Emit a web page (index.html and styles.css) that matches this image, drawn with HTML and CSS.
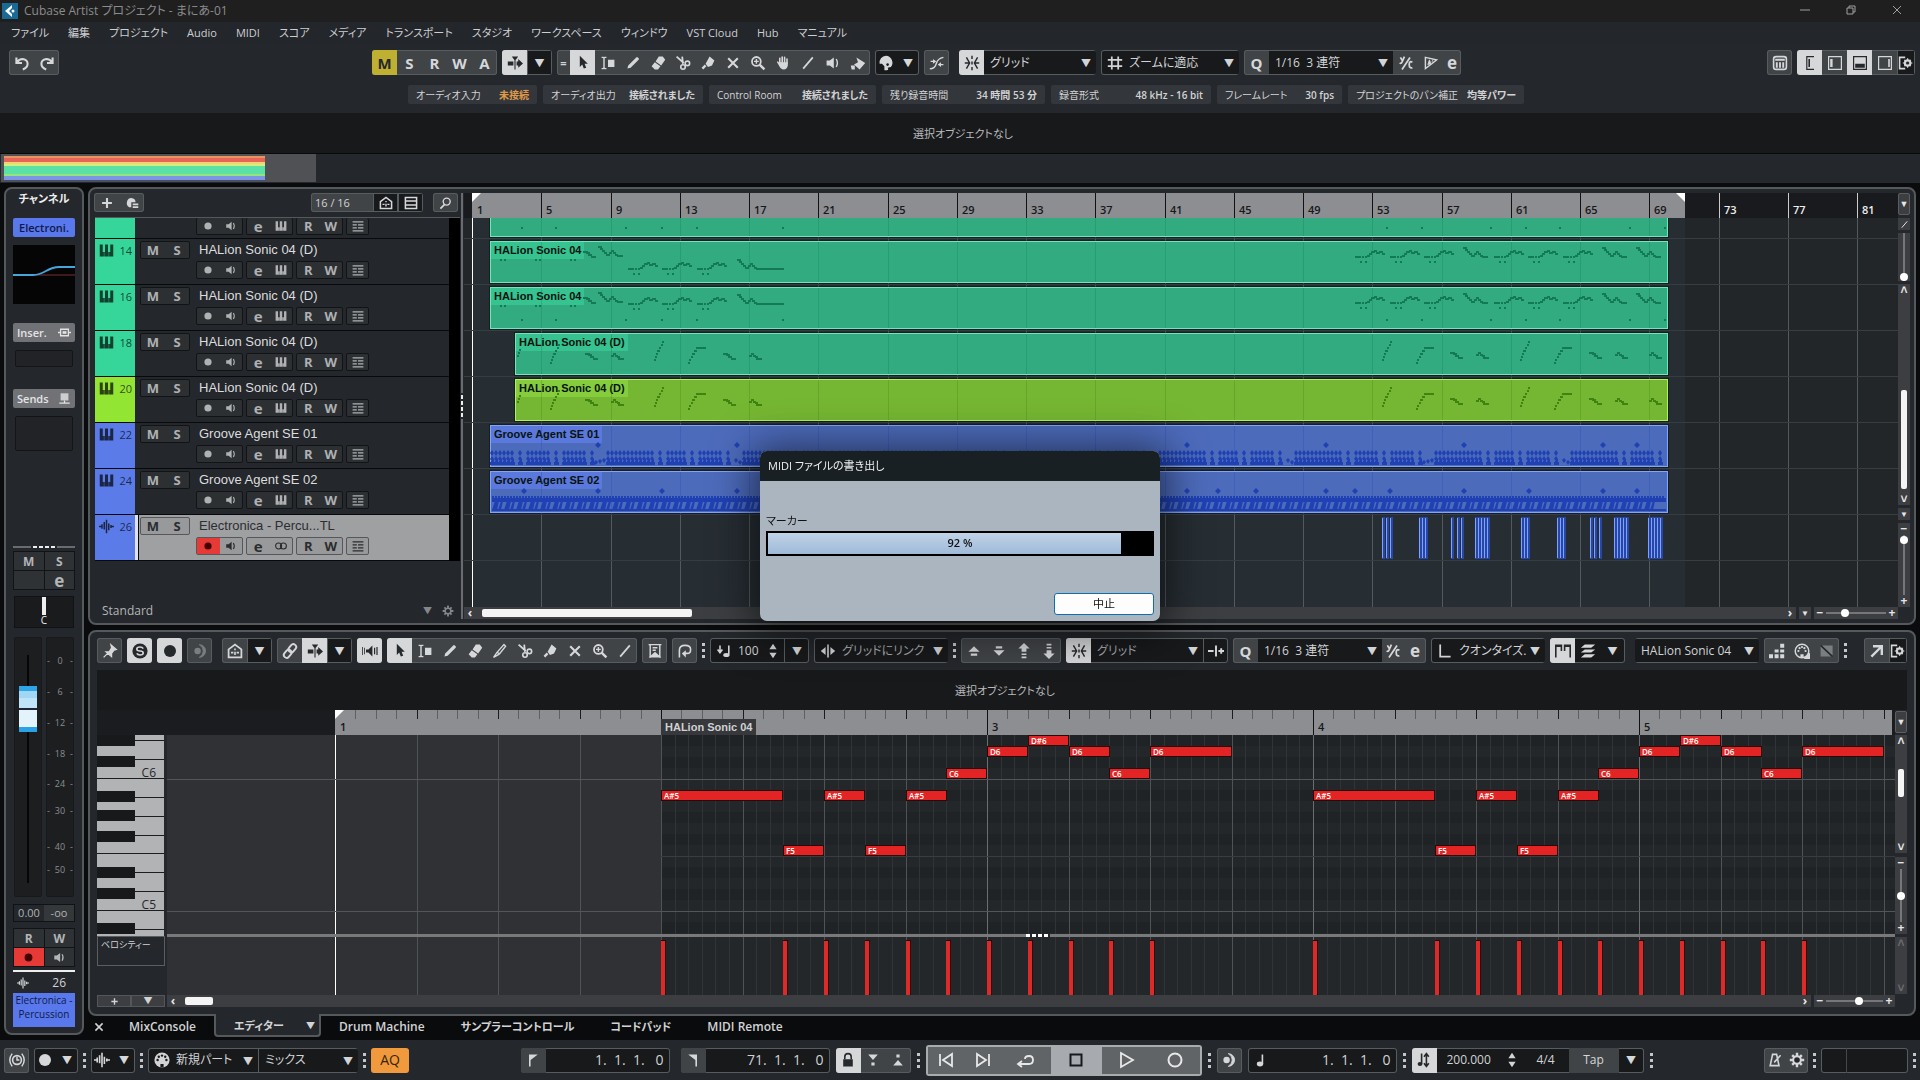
FILE: index.html
```html
<!DOCTYPE html>
<html lang="ja">
<head>
    <meta charset="UTF-8">
    <meta name="viewport" content="width=device-width, initial-scale=1.0">
    <title>Cubase Artist プロジェクト - まにあ-01</title>
    <link rel="stylesheet" href="styles.css">
</head>
<body>
    <!-- icon sprite -->
    <svg class="sprite" width="0" height="0">
        <symbol id="i-undo" viewBox="0 0 20 20"><path d="M3 3v7h7M4 9q2-4 7-4 6 1 6 6t-6 7" fill="none" stroke="currentColor" stroke-width="2.6"/></symbol>
        <symbol id="i-redo" viewBox="0 0 20 20"><path d="M17 3v7h-7M16 9q-2-4-7-4-6 1-6 6t6 7" fill="none" stroke="currentColor" stroke-width="2.6"/></symbol>
        <symbol id="i-scroll" viewBox="0 0 20 20"><path d="M6 2h8l-3 4H9zM9.300 5h1.400v13H9.300zM1 8h7v5H1zM12 8h2V5l6 5.500-6 5.500v-3h-2z" fill="currentColor"/></symbol>
        <symbol id="i-cursor" viewBox="0 0 20 20"><path d="M6 1v14l3-3 2 5 3-1-2-5h4z" fill="currentColor"/></symbol>
        <symbol id="i-ibeam" viewBox="0 0 20 20"><path d="M2 3h2l1 1 1-1h2M2 17h2l1-1 1 1h2M5 4v12" fill="none" stroke="currentColor" stroke-width="1.8"/><path d="M10 6h8v9h-8z" fill="currentColor"/></symbol>
        <symbol id="i-pencil" viewBox="0 0 20 20"><path d="M3 17l1-4L14 3q1-1 2 0l1 1q1 1 0 2L7 16z" fill="currentColor"/></symbol>
        <symbol id="i-eraser" viewBox="0 0 20 20"><path d="M11 2h5l3 4-5 7-7-5zM6 9l7 5-3 4H6l-4-4z" fill="currentColor"/></symbol>
        <symbol id="i-cut" viewBox="0 0 20 20"><path d="M2 2l9 8M9 2l1 9" stroke="currentColor" stroke-width="2.200"/><g fill="none" stroke="currentColor" stroke-width="2"><circle cx="10" cy="15" r="2.800"/><circle cx="15.500" cy="10.500" r="2.800"/></g></symbol>
        <symbol id="i-glue" viewBox="0 0 20 20"><path d="M12 2l6 5-3 6-5 2-3-4zM6 12l2 2-4 4-2-2z" fill="currentColor"/></symbol>
        <symbol id="i-x" viewBox="0 0 20 20"><path d="M4 4l12 12M16 4L4 16" stroke="currentColor" stroke-width="2.600"/></symbol>
        <symbol id="i-zoom" viewBox="0 0 20 20"><circle cx="8" cy="8" r="5.500" fill="none" stroke="currentColor" stroke-width="2.200"/><path d="M12 12l6 6" stroke="currentColor" stroke-width="3"/><path d="M5 8h6M8 5v6" stroke="currentColor" stroke-width="1.800"/></symbol>
        <symbol id="i-search" viewBox="0 0 20 20"><circle cx="11" cy="8" r="5" fill="none" stroke="currentColor" stroke-width="2"/><path d="M8 12l-6 6" stroke="currentColor" stroke-width="2.500"/></symbol>
        <symbol id="i-hand" viewBox="0 0 20 20"><path d="M6 11V4M9 10V2.500M12 10V3M15 11V5M3.500 9l2.500 4" stroke="currentColor" stroke-width="2" stroke-linecap="round"/><path d="M5 9h11v4q-1 5-5 5-4 0-6-5z" fill="currentColor"/></symbol>
        <symbol id="i-line" viewBox="0 0 20 20"><path d="M4 17L16 3" stroke="currentColor" stroke-width="2.200"/></symbol>
        <symbol id="i-speaker" viewBox="0 0 20 20"><path d="M2 7h4l5-4v14l-5-4H2z" fill="currentColor"/><path d="M14 5q3 5 0 10" fill="none" stroke="currentColor" stroke-width="1.800"/></symbol>
        <symbol id="i-bucket" viewBox="0 0 20 20"><path d="M8 3l11 7-7 8-7-6 5-3zM1 13h5v5H2z" fill="currentColor"/></symbol>
        <symbol id="i-palette" viewBox="0 0 20 20"><path d="M10 1a8.500 8.500 0 0 1 6 14l-4 1q2 3-1 3H8v-5l-3-3H2A8.500 8.500 0 0 1 10 1z" fill="currentColor"/><circle cx="12" cy="12" r="1.600" fill="#17191b"/></symbol>
        <symbol id="i-curve" viewBox="0 0 20 20"><path d="M1 17q6 1 8-6t9-8M2 8h6M12 12h6" fill="none" stroke="currentColor" stroke-width="1.800"/><path d="M5 5l4 3-4 3zM15 9l-4 3 4 3z" fill="currentColor"/></symbol>
        <symbol id="i-snap" viewBox="0 0 20 20"><path d="M10 1v4M10 8v4M10 15v4M3 3l4 7-4 7M17 3l-4 7 4 7M1 10h5M14 10h5" fill="none" stroke="currentColor" stroke-width="1.800"/></symbol>
        <symbol id="i-hash" viewBox="0 0 20 20"><path d="M6 2v16M14 2v16M1 6h18M1 14h18" stroke="currentColor" stroke-width="2.200"/></symbol>
        <symbol id="i-iq" viewBox="0 0 20 20"><path d="M3 3l3 5M8 2L5 9q-1 2-3 1M15 3L5 18M18 9q-4-2-4 3t4 4" fill="none" stroke="currentColor" stroke-width="2.200"/></symbol>
        <symbol id="i-auto" viewBox="0 0 20 20"><path d="M3 3l14 3-6 5-8 6z" fill="none" stroke="currentColor" stroke-width="1.800"/><path d="M6 12l2-6 2 5zM11 9l2-4" fill="currentColor" stroke="currentColor"/></symbol>
        <symbol id="i-keyb" viewBox="0 0 20 20"><rect x="2" y="2" width="16" height="16" rx="3" fill="none" stroke="currentColor" stroke-width="2"/><path d="M6 9v7M10 9v7M14 9v7M4 6h12" stroke="currentColor" stroke-width="2.400"/></symbol>
        <symbol id="i-zl" viewBox="0 0 20 20"><path d="M15 2H6v16h9" fill="none" stroke="currentColor" stroke-width="1.500"/><path d="M8 5h2v10H8z" fill="currentColor"/></symbol>
        <symbol id="i-zleft" viewBox="0 0 20 20"><path d="M2 2h16v16H2z" fill="none" stroke="currentColor" stroke-width="1.500"/><path d="M4 5h3v10H4z" fill="currentColor"/></symbol>
        <symbol id="i-zlow" viewBox="0 0 20 20"><path d="M2 2h16v16H2z" fill="none" stroke="currentColor" stroke-width="1.500"/><path d="M4 11h12v5H4z" fill="currentColor"/></symbol>
        <symbol id="i-zright" viewBox="0 0 20 20"><path d="M2 2h16v16H2z" fill="none" stroke="currentColor" stroke-width="1.500"/><path d="M14 5h2v10h-2z" fill="currentColor"/></symbol>
        <symbol id="i-setup" viewBox="0 0 20 20"><path d="M9 3H2v14h7" fill="none" stroke="currentColor" stroke-width="2"/><circle cx="12" cy="10" r="3.500" fill="none" stroke="currentColor" stroke-width="2.500"/><path d="M12 4v12M6 10h12M8 6l8 8M16 6l-8 8" stroke="currentColor" stroke-width="1.500"/><circle cx="12" cy="10" r="2" fill="#24272b"/></symbol>
        <symbol id="i-gear" viewBox="0 0 20 20"><path d="M10 1v18M1 10h18M4 4l12 12M16 4L4 16" stroke="currentColor" stroke-width="3"/><circle cx="10" cy="10" r="6" fill="currentColor"/><circle cx="10" cy="10" r="3.500" fill="#24272b"/></symbol>
        <symbol id="i-piano" viewBox="0 0 20 20"><path d="M1 2h4v10h1.500v6H1zM8 2h4v10h1v6H7v-6h1zM19 2h-4v10h-1.500v6H19z" fill="currentColor"/></symbol>
        <symbol id="i-wave" viewBox="0 0 20 20"><path d="M0 10h3M4 7v6M7 4v10M10 1v18M13 6v9M16 8v4M17 10h3" stroke="currentColor" stroke-width="2"/></symbol>
        <symbol id="i-rec" viewBox="0 0 20 20"><circle cx="10" cy="10" r="6" fill="currentColor"/></symbol>
        <symbol id="i-lanes" viewBox="0 0 20 20"><path d="M1 3h18M1 8h7M10 8h9M1 13h7M10 13h9M1 18h18" stroke="currentColor" stroke-width="2"/></symbol>
        <symbol id="i-stereo" viewBox="0 0 20 20"><g fill="none" stroke="currentColor" stroke-width="1.800"><circle cx="6" cy="10" r="5"/><circle cx="14" cy="10" r="5"/></g></symbol>
        <symbol id="i-house" viewBox="0 0 20 20"><path d="M2 8l8-6 8 6v10H2z" fill="none" stroke="currentColor" stroke-width="2.200"/><path d="M10 7v2M10 11v4M5 12h3M12 12h3" stroke="currentColor" stroke-width="2"/></symbol>
        <symbol id="i-list" viewBox="0 0 20 20"><path d="M2 2h16v16H2zM2 7h16M2 13h16" fill="none" stroke="currentColor" stroke-width="2.200"/></symbol>
        <symbol id="i-plus" viewBox="0 0 20 20"><path d="M10 3v14M3 10h14" stroke="currentColor" stroke-width="3"/></symbol>
        <symbol id="i-preset" viewBox="0 0 20 20"><path d="M9 3a7 6 0 0 1 6 6H9v7H6A7 7 0 0 1 9 3z" fill="currentColor"/><path d="M11 12h8M11 16h8" stroke="currentColor" stroke-width="2.500"/></symbol>
        <symbol id="i-pin" viewBox="0 0 20 20"><path d="M11 2l7 6-3 1-3 4v4L5 11h4l3-5zM8 12l-6 6" fill="currentColor" stroke="currentColor" stroke-width="1.500"/></symbol>
        <symbol id="i-solo" viewBox="0 0 20 20"><circle cx="10" cy="10" r="9.500" fill="currentColor"/><path d="M14 7q-1-2-4-2-4 0-4 2.500T10 10t4 2.500T10 15q-3 0-4-2" fill="none" stroke="#d6d7d9" stroke-width="2"/></symbol>
        <symbol id="i-disc" viewBox="0 0 20 20"><circle cx="10" cy="10" r="7.500" fill="currentColor"/></symbol>
        <symbol id="i-moon" viewBox="0 0 20 20"><circle cx="7" cy="10" r="4" fill="currentColor"/><path d="M9 2a8 8 0 0 1 0 16q5-3 5-8t-5-8z" fill="currentColor" stroke="currentColor"/></symbol>
        <symbol id="i-link" viewBox="0 0 20 20"><g fill="none" stroke="currentColor" stroke-width="2.400" transform="rotate(-50 10 10)"><rect x="0" y="6.500" width="11" height="7" rx="3.500"/><rect x="9" y="6.500" width="11" height="7" rx="3.500"/></g></symbol>
        <symbol id="i-horn" viewBox="0 0 20 20"><path d="M5 8h3l5-5v14l-5-5H5zM15 6h1.500v8H15zM18 5h1.500v10H18zM0 5h1v10H0zM2.500 6h1v8h-1z" fill="currentColor"/></symbol>
        <symbol id="i-trim" viewBox="0 0 20 20"><path d="M2 18l4-6L15 2l2 2L9 14zM7 12l3 2" fill="none" stroke="currentColor" stroke-width="1.700"/></symbol>
        <symbol id="i-marker" viewBox="0 0 20 20"><path d="M2 2h16M4 2v16M16 2v16M7 6h6M7 9h4" stroke="currentColor" stroke-width="1.800"/><path d="M2 18l8-7 8 7z" fill="currentColor"/></symbol>
        <symbol id="i-loop" viewBox="0 0 20 20"><path d="M3 18V9q0-6 7-6t7 5-4 5H9" fill="none" stroke="currentColor" stroke-width="2"/><path d="M11 9v9l-5-5z" fill="currentColor"/></symbol>
        <symbol id="i-note" viewBox="0 0 20 20"><path d="M5 3v9M2 8l3 4 3-4M16 3v11" fill="none" stroke="currentColor" stroke-width="2"/><ellipse cx="13" cy="15" rx="4" ry="2.500" fill="currentColor"/></symbol>
        <symbol id="i-qnote" viewBox="0 0 20 20"><path d="M13 3v12" stroke="currentColor" stroke-width="2"/><ellipse cx="10" cy="15" rx="4" ry="3" fill="currentColor"/></symbol>
        <symbol id="i-spin" viewBox="0 0 10 20"><path d="M5 2l4 6H1zM5 18l4-6H1z" fill="currentColor"/></symbol>
        <symbol id="i-glink" viewBox="0 0 20 20"><path d="M10 2v16" stroke="currentColor" stroke-width="2"/><path d="M7 5v10l-6-5zM13 5v10l6-5z" fill="currentColor"/></symbol>
        <symbol id="i-up" viewBox="0 0 20 20"><path d="M10 4l7 7H3zM6 13h8v3H6z" fill="currentColor"/></symbol>
        <symbol id="i-down" viewBox="0 0 20 20"><path d="M10 16l7-7H3zM6 4h8v3H6z" fill="currentColor"/></symbol>
        <symbol id="i-up2" viewBox="0 0 20 20"><path d="M10 0l7 7h-4v4H7V7H3zM7 13h6v2H7zM7 17h6v2H7z" fill="currentColor"/></symbol>
        <symbol id="i-down2" viewBox="0 0 20 20"><path d="M10 20l7-7h-4V9H7v4H3zM7 5h6v2H7zM7 1h6v2H7z" fill="currentColor"/></symbol>
        <symbol id="i-zero" viewBox="0 0 20 20"><path d="M0 10h7M10 3v14M13 10h7M16.500 6.500v7" stroke="currentColor" stroke-width="2.400"/></symbol>
        <symbol id="i-len" viewBox="0 0 20 20"><path d="M4 2v15h13" fill="none" stroke="currentColor" stroke-width="2.200"/></symbol>
        <symbol id="i-parts" viewBox="0 0 20 20"><path d="M0 2h9v8H7V5H2v13H0zM11 2h9v16h-2V5h-5v5h-2z" fill="currentColor"/></symbol>
        <symbol id="i-layers" viewBox="0 0 20 20"><path d="M6 2h13l-5 4H1zM6 8h13l-5 4H1zM6 14h13l-5 4H1z" fill="currentColor"/></symbol>
        <symbol id="i-steps" viewBox="0 0 20 20"><path d="M0 14h5v5H0zM7 14h5v5H7zM14 14h5v5h-5zM7 8h5v4H7zM14 8h5v4h-5zM14 1h5v5h-5z" fill="currentColor"/></symbol>
        <symbol id="i-midi" viewBox="0 0 20 20"><circle cx="10" cy="10" r="8.500" fill="none" stroke="currentColor" stroke-width="1.800"/><g fill="currentColor"><circle cx="5.500" cy="10" r="1.400"/><circle cx="7" cy="6.500" r="1.400"/><circle cx="10" cy="5" r="1.400"/><circle cx="13" cy="6.500" r="1.400"/><circle cx="14.500" cy="10" r="1.400"/><path d="M8 14h4v4H8zM20 12v8h-8z"/></g></symbol>
        <symbol id="i-din" viewBox="0 0 20 20"><circle cx="10" cy="10" r="9.500" fill="currentColor"/><g fill="#17191b"><circle cx="4.500" cy="10" r="1.500"/><circle cx="6" cy="6" r="1.500"/><circle cx="10" cy="4.500" r="1.500"/><circle cx="14" cy="6" r="1.500"/><circle cx="15.500" cy="10" r="1.500"/><path d="M8 15h4v4H8z"/></g></symbol>
        <symbol id="i-dim" viewBox="0 0 20 20"><path d="M2 3h15v14z M2 3v14h15" fill="currentColor"/><path d="M2 3l15 14" stroke="#24272b" stroke-width="2"/></symbol>
        <symbol id="i-open" viewBox="0 0 20 20"><path d="M3 17L15 5M5 4h11v11" fill="none" stroke="currentColor" stroke-width="3"/></symbol>
        <symbol id="i-clock" viewBox="0 0 20 20"><circle cx="10" cy="10" r="5.500" fill="none" stroke="currentColor" stroke-width="2"/><path d="M10 6v4h3M4 2q-6 8 0 16M16 2q6 8 0 16" fill="none" stroke="currentColor" stroke-width="1.800"/></symbol>
        <symbol id="i-locl" viewBox="0 0 20 20"><path d="M5 3h11l-9 7v8H5z" fill="currentColor"/></symbol>
        <symbol id="i-locr" viewBox="0 0 20 20"><path d="M15 3H4l9 7v8h2z" fill="currentColor"/></symbol>
        <symbol id="i-lock" viewBox="0 0 20 20"><path d="M4 9h12v9H4z" fill="currentColor"/><path d="M6 9V6q0-4 4-4t4 4v3" fill="none" stroke="currentColor" stroke-width="2"/></symbol>
        <symbol id="i-pin1" viewBox="0 0 20 20"><path d="M4 3h12l-6 7zM8 13h4v4H8z" fill="currentColor"/></symbol>
        <symbol id="i-pin2" viewBox="0 0 20 20"><path d="M4 17h12l-6-7zM8 3h4v4H8z" fill="currentColor"/></symbol>
        <symbol id="i-prev" viewBox="0 0 20 20"><path d="M4 4v12M16 4v12l-9-6z" fill="none" stroke="currentColor" stroke-width="1.800"/></symbol>
        <symbol id="i-next" viewBox="0 0 20 20"><path d="M16 4v12M4 4v12l9-6z" fill="none" stroke="currentColor" stroke-width="1.800"/></symbol>
        <symbol id="i-cycle" viewBox="0 0 20 20"><path d="M3 14h10q4 0 4-4t-4-4-4 3M6 11l-4 3 4 3" fill="none" stroke="currentColor" stroke-width="1.800"/></symbol>
        <symbol id="i-stop" viewBox="0 0 20 20"><path d="M4.500 4.500h11v11h-11z" fill="none" stroke="currentColor" stroke-width="2"/></symbol>
        <symbol id="i-play" viewBox="0 0 20 20"><path d="M5 3v14l12-7z" fill="none" stroke="currentColor" stroke-width="1.800"/></symbol>
        <symbol id="i-record" viewBox="0 0 20 20"><circle cx="10" cy="10" r="6.500" fill="none" stroke="currentColor" stroke-width="2"/></symbol>
        <symbol id="i-tempo" viewBox="0 0 20 20"><path d="M7 2v13M13 3v14M10 6l3-4 3 4M10 14l3 4 3-4" fill="none" stroke="currentColor" stroke-width="2"/><ellipse cx="5" cy="15" rx="3" ry="2.500" fill="currentColor"/></symbol>
        <symbol id="i-metro" viewBox="0 0 20 20"><path d="M7 3h5l3 14H4zM9 13l8-9" fill="none" stroke="currentColor" stroke-width="2"/></symbol>
        <symbol id="i-insert" viewBox="0 0 20 20"><path d="M4 5h12v10H4zM0 10h4M16 10h4" fill="none" stroke="currentColor" stroke-width="2"/><path d="M7 8h6v4H7z" fill="currentColor"/></symbol>
        <symbol id="i-send" viewBox="0 0 20 20"><path d="M4 2h12v11H4z" fill="currentColor" opacity=".8"/><path d="M2 17h16M10 13v5" stroke="currentColor" stroke-width="2"/></symbol>
    </svg>

    <header class="titlebar">
        <svg class="logo" viewBox="0 0 16 16"><rect width="16" height="16" fill="#1a6a96"/><path d="M10 2L3 8l7 6v-3L7 8l3-3z" fill="#fff"/><circle cx="11" cy="8" r="1.500" fill="#fff"/></svg>
        <span class="app-title">Cubase Artist プロジェクト - まにあ-01</span>
        <div class="win-buttons">
            <button aria-label="最小化"><svg viewBox="0 0 10 10"><path d="M0 5h10"/></svg></button>
            <button aria-label="元に戻す"><svg viewBox="0 0 10 10"><path d="M1 3h6v6H1zM3 3V1h6v6H7"/></svg></button>
            <button aria-label="閉じる"><svg viewBox="0 0 10 10"><path d="M1 1l8 8M9 1L1 9"/></svg></button>
        </div>
    </header>

    <nav class="menubar">
        <a href="#">ファイル</a><a href="#">編集</a><a href="#">プロジェクト</a><a href="#">Audio</a><a href="#">MIDI</a><a href="#">スコア</a><a href="#">メディア</a><a href="#">トランスポート</a><a href="#">スタジオ</a><a href="#">ワークスペース</a><a href="#">ウィンドウ</a><a href="#">VST Cloud</a><a href="#">Hub</a><a href="#">マニュアル</a>
    </nav>

    <div class="toolbar main-toolbar">
        <div class="group">
            <button><svg><use href="#i-undo"/></svg></button><button><svg><use href="#i-redo"/></svg></button>
        </div>
        <div class="toolbar-mid">
            <div class="group letters"><button class="mute-on">M</button><button>S</button><button>R</button><button>W</button><button>A</button></div>
            <div class="group"><button class="on"><svg><use href="#i-scroll"/></svg></button><button class="dark">▼</button></div>
            <div class="group">
                <i class="handle">=</i>
                <button class="on"><svg><use href="#i-cursor"/></svg></button><button><svg><use href="#i-ibeam"/></svg></button><button><svg><use href="#i-pencil"/></svg></button><button><svg><use href="#i-eraser"/></svg></button><button><svg><use href="#i-cut"/></svg></button><button><svg><use href="#i-glue"/></svg></button><button><svg><use href="#i-x"/></svg></button><button><svg><use href="#i-zoom"/></svg></button><button><svg><use href="#i-hand"/></svg></button><button><svg><use href="#i-line"/></svg></button><button><svg><use href="#i-speaker"/></svg></button><button><svg><use href="#i-bucket"/></svg></button>
            </div>
            <div class="group field narrow"><button><svg><use href="#i-palette"/></svg></button><button>▼</button></div>
            <div class="group"><button><svg><use href="#i-curve"/></svg></button></div>
            <div class="group field push"><button class="on"><svg><use href="#i-snap"/></svg></button><span class="pick w112"><select aria-label="スナップ"><option>グリッド</option></select></span></div>
            <div class="group field"><svg class="lead"><use href="#i-hash"/></svg><span class="pick w116"><select aria-label="グリッドの種類"><option>ズームに適応</option></select></span></div>
            <div class="group"><button class="q">Q</button><span class="pick w124"><select aria-label="クオンタイズ"><option>1/16&nbsp; 3 連符</option></select></span><button><svg><use href="#i-iq"/></svg></button><button><svg><use href="#i-auto"/></svg></button><button class="e slim">e</button></div>
        </div>
        <div class="toolbar-end">
            <div class="group"><button><svg><use href="#i-keyb"/></svg></button></div>
            <div class="group"><button class="on"><svg><use href="#i-zl"/></svg></button><button><svg><use href="#i-zleft"/></svg></button><button class="on"><svg><use href="#i-zlow"/></svg></button><button><svg><use href="#i-zright"/></svg></button><button class="dark slim"><svg><use href="#i-setup"/></svg></button></div>
        </div>
    </div>

    <dl class="status">
        <div><dt>オーディオ入力</dt><dd class="warn">未接続</dd></div>
        <div><dt>オーディオ出力</dt><dd>接続されました</dd></div>
        <div><dt>Control Room</dt><dd>接続されました</dd></div>
        <div><dt>残り録音時間</dt><dd>34 時間 53 分</dd></div>
        <div><dt>録音形式</dt><dd>48 kHz - 16 bit</dd></div>
        <div><dt>フレームレート</dt><dd>30 fps</dd></div>
        <div><dt>プロジェクトのパン補正</dt><dd>均等パワー</dd></div>
    </dl>

    <div class="infoline">選択オブジェクトなし</div>

    <div class="overview"><div class="overview-view"><div class="overview-parts"></div></div></div>

    <main class="workspace">
        <aside class="panel inspector">
            <h2>チャンネル</h2>
            <button class="ch-select">Electroni.</button>
            <svg class="eq" viewBox="0 0 62 59"><path d="M0 30h62" stroke="#7c2f38"/><path d="M0 30h20c12 0 14-8 26-8h16" fill="none" stroke="#45a5dc" stroke-width="2"/></svg>
            <button class="section">Inser.<svg><use href="#i-insert"/></svg></button>
            <div class="slot"></div>
            <button class="section">Sends<svg><use href="#i-send"/></svg></button>
            <div class="slot tall"></div>
            <div class="splitter"></div>
            <div class="ch-grid"><button>M</button><button>S</button><button></button><button class="e">e</button></div>
            <div class="pan"><i></i>C</div>
            <div class="meters">
                <div class="strip"><input class="fader" type="range" min="0" max="100" value="83" aria-label="音量"></div>
                <div class="strip scale" id="scale"></div>
            </div>
            <div class="values"><input value="0.00" aria-label="レベル"><output>-oo</output></div>
            <div class="ch-grid"><button>R</button><button>W</button><button class="armed"><svg><use href="#i-rec"/></svg></button><button><svg><use href="#i-speaker"/></svg></button></div>
            <div class="ch-num"><svg><use href="#i-wave"/></svg>26</div>
            <div class="ch-name">Electronica -<br>Percussion</div>
        </aside>

        <div class="zones">
            <section class="panel project">
                <div class="tracklist">
                    <div class="tl-head">
                        <div class="group"><button><svg><use href="#i-plus"/></svg></button><button><svg><use href="#i-preset"/></svg></button></div>
                        <div class="group count"><span>16 / 16</span><button class="dark"><svg><use href="#i-house"/></svg></button><button class="dark"><svg><use href="#i-list"/></svg></button></div>
                        <div class="group"><button><svg><use href="#i-search"/></svg></button></div>
                    </div>
                    <div class="tracks" id="tracks"></div>
                    <div class="tl-foot"><span>Standard</span><i>▼</i><svg><use href="#i-gear"/></svg></div>
                </div>
                <div class="v-divider"></div>
                <div class="timeline">
                    <div class="ruler" id="ruler"></div>
                    <div class="lanes" id="lanes"></div>
                    <div class="hscroll"><b>‹</b><div class="htrack"><div class="hthumb wide"></div></div><b>›</b><b class="cell">▼</b><div class="zoomer"><b>−</b><input type="range" value="28" aria-label="横ズーム"><b>+</b></div></div>
                </div>
                <div class="vscroll">
                    <b class="cell head">▼</b>
                    <b class="cell"><svg><use href="#i-line"/></svg></b>
                    <input class="vr" type="range" value="0" aria-label="波形ズーム">
                    <div class="vtrack"><b>˄</b><div class="vthumb low"></div><b>˅</b></div>
                    <b class="cell">▼</b>
                    <div class="vzoom"><b>−</b><input class="vr" type="range" value="98" aria-label="縦ズーム"><b>+</b></div>
                </div>
            </section>

            <section class="panel editor">
                <div class="toolbar ed-toolbar">
                    <div class="group"><button><svg><use href="#i-pin"/></svg></button></div>
                    <div class="group"><button class="on"><svg><use href="#i-solo"/></svg></button></div>
                    <div class="group"><button class="on"><svg><use href="#i-disc"/></svg></button></div>
                    <div class="group"><button class="off"><svg><use href="#i-moon"/></svg></button></div>
                    <div class="group push"><button><svg><use href="#i-house"/></svg></button><button class="dark">▼</button></div>
                    <div class="group"><button><svg><use href="#i-link"/></svg></button><button class="on"><svg><use href="#i-scroll"/></svg></button><button class="dark">▼</button></div>
                    <div class="group"><button class="on"><svg><use href="#i-horn"/></svg></button></div>
                    <div class="group"><button class="on"><svg><use href="#i-cursor"/></svg></button><button><svg><use href="#i-ibeam"/></svg></button><button><svg><use href="#i-pencil"/></svg></button><button><svg><use href="#i-eraser"/></svg></button><button><svg><use href="#i-trim"/></svg></button><button><svg><use href="#i-cut"/></svg></button><button><svg><use href="#i-glue"/></svg></button><button><svg><use href="#i-x"/></svg></button><button><svg><use href="#i-zoom"/></svg></button><button><svg><use href="#i-line"/></svg></button></div>
                    <div class="group"><button><svg><use href="#i-marker"/></svg></button></div>
                    <div class="group"><button><svg><use href="#i-loop"/></svg></button></div>
                    <i class="dots"></i>
                    <div class="group field"><svg class="lead"><use href="#i-note"/></svg><input class="vel" value="100" aria-label="ベロシティー"><svg class="spin"><use href="#i-spin"/></svg><button class="split">▼</button></div>
                    <div class="group field"><svg class="lead"><use href="#i-glink"/></svg><span class="pick w112 soft"><select aria-label="長さ"><option>グリッドにリンク</option></select></span></div>
                    <i class="dots"></i>
                    <div class="group"><button><svg><use href="#i-up"/></svg></button><button><svg><use href="#i-down"/></svg></button><button><svg><use href="#i-up2"/></svg></button><button><svg><use href="#i-down2"/></svg></button></div>
                    <div class="group field"><button class="on"><svg><use href="#i-snap"/></svg></button><span class="pick w112 soft"><select aria-label="スナップの種類"><option>グリッド</option></select></span><button class="split"><svg><use href="#i-zero"/></svg></button></div>
                    <div class="group"><button class="q">Q</button><span class="pick w124"><select aria-label="クオンタイズ値"><option>1/16&nbsp; 3 連符</option></select></span><button class="mid"><svg><use href="#i-iq"/></svg></button><button class="e mid">e</button></div>
                    <div class="group field"><svg class="lead"><use href="#i-len"/></svg><span class="pick w92"><select aria-label="長さクオンタイズ"><option>クオンタイズ.</option></select></span></div>
                    <div class="group field"><button class="on"><svg><use href="#i-parts"/></svg></button><button><svg><use href="#i-layers"/></svg></button><button>▼</button></div>
                    <div class="group field push"><span class="pick w124"><select aria-label="パート"><option>HALion Sonic 04</option></select></span></div>
                    <div class="group"><button><svg><use href="#i-steps"/></svg></button><button><svg><use href="#i-midi"/></svg></button><button class="off"><svg><use href="#i-dim"/></svg></button></div>
                    <i class="dots"></i>
                    <div class="group last"><button><svg><use href="#i-open"/></svg></button><button class="dark slim"><svg><use href="#i-setup"/></svg></button></div>
                </div>
                <div class="ed-info">選択オブジェクトなし</div>
                <div class="ed-body">
                    <div class="ed-keys">
                        <div class="key-top"></div>
                        <div class="keys" id="keys"></div>
                        <div class="lane-name">ベロシティー</div>
                        <div class="lane-add"><button><svg><use href="#i-plus"/></svg></button><button>▼</button></div>
                    </div>
                    <div class="ed-main">
                        <div class="ed-ruler" id="edRuler"></div>
                        <div class="notes" id="notes"></div>
                        <div class="h-divider"></div>
                        <div class="velocity" id="velocity"></div>
                        <div class="hscroll"><b>‹</b><div class="htrack"><div class="hthumb"></div></div><b>›</b><div class="zoomer short"><b>−</b><input type="range" value="60" aria-label="エディター横ズーム"><b>+</b></div></div>
                    </div>
                    <div class="vscroll ed-scroll">
                        <b class="cell head">▼</b>
                        <div class="vtrack"><b>˄</b><div class="vthumb"></div><b>˅</b></div>
                        <div class="vzoom"><b>−</b><input class="vr" type="range" value="50" aria-label="エディター縦ズーム"><b>+</b></div>
                        <div class="vtrack faint"><b>˄</b><b>˅</b></div>
                    </div>
                </div>
            </section>

            <nav class="tabs">
                <button class="close"><svg><use href="#i-x"/></svg></button>
                <button class="tab-first">MixConsole</button>
                <button class="active"><span>エディター</span><i>▼</i></button>
                <button>Drum Machine</button>
                <button class="kana">サンプラーコントロール</button>
                <button class="kana">コードパッド</button>
                <button>MIDI Remote</button>
            </nav>
        </div>
    </main>

    <footer class="toolbar transport">
        <div class="group"><button><svg><use href="#i-clock"/></svg></button></div>
        <div class="group field narrow"><button><svg><use href="#i-disc"/></svg></button><button>▼</button></div>
        <i class="dots"></i>
        <div class="group field narrow"><button><svg><use href="#i-wave"/></svg></button><button>▼</button></div>
        <i class="dots"></i>
        <div class="group field"><svg class="lead"><use href="#i-din"/></svg><span class="pick w88"><select aria-label="MIDI 録音モード"><option>新規パート</option></select></span><span class="pick w100 split"><select aria-label="MIDI 録音"><option>ミックス</option></select></span></div>
        <i class="dots"></i>
        <button class="aq">AQ</button>

        <div class="transport-mid">
            <div class="group field"><button class="lit"><svg><use href="#i-locl"/></svg></button><input class="pos" value="1.  1.  1.   0" aria-label="左ロケーター"></div>
            <div class="group field push"><button class="lit"><svg><use href="#i-locr"/></svg></button><input class="pos" value="71.  1.  1.   0" aria-label="右ロケーター"></div>
            <div class="group"><button class="on"><svg><use href="#i-lock"/></svg></button><button><svg><use href="#i-pin1"/></svg></button><button><svg><use href="#i-pin2"/></svg></button></div>
            <i class="dots"></i>
            <div class="play-keys"><button class="step"><svg><use href="#i-prev"/></svg></button><button class="step"><svg><use href="#i-next"/></svg></button><button><svg><use href="#i-cycle"/></svg></button><button class="stopped"><svg><use href="#i-stop"/></svg></button><button><svg><use href="#i-play"/></svg></button><button><svg><use href="#i-record"/></svg></button></div>
            <i class="dots"></i>
            <div class="group"><button><svg><use href="#i-moon"/></svg></button></div>
            <div class="group field"><button><svg><use href="#i-qnote"/></svg></button><input class="pos" value="1.  1.  1.   0" aria-label="現在位置"></div>
            <i class="dots"></i>
            <div class="group field"><button class="on"><svg><use href="#i-tempo"/></svg></button><input class="tempo" value="200.000" aria-label="テンポ"><svg class="spin"><use href="#i-spin"/></svg><input class="sig" value="4/4" aria-label="拍子"><button class="lit tap">Tap</button><button>▼</button></div>
            <i class="dots"></i>
        </div>

        <div class="transport-end">
            <div class="group"><button class="mid"><svg><use href="#i-metro"/></svg></button><button class="mid"><svg><use href="#i-gear"/></svg></button></div>
            <i class="dots"></i>
            <div class="group field perf"></div>
            <i class="dots"></i>
        </div>
    </footer>

    <div class="dialog" role="dialog" aria-labelledby="dlg-title">
        <h1 id="dlg-title">MIDI ファイルの書き出し</h1>
        <div class="dialog-body">
            <p>マーカー</p>
            <div class="progress"><div class="bar" style="width: 92%"></div><span>92 %</span></div>
            <button>中止</button>
        </div>
    </div>

    <script src="script.js"></script>
</body>
</html>
```

FILE: styles.css
```css
* {
    box-sizing: border-box;
}

body {
    margin: 0;
    height: 100vh;
    display: flex;
    flex-direction: column;
    overflow: hidden;
    background: #0a0b0c;
    color: #d2d3d5;
    font: 11px/16px "Open Sans", "Noto Sans CJK JP", sans-serif;
    font-feature-settings: "palt";
}

button, input, select {
    font: inherit;
    font-feature-settings: inherit;
    color: inherit;
    background: none;
    border: 0;
    padding: 0;
    margin: 0;
    border-radius: 0;
    outline: 0;
    min-width: 0;
}

i { font-style: normal; }
.sprite { position: absolute; }

/* title and menu */
.titlebar {
    display: flex;
    align-items: center;
    height: 22px;
    flex: none;
    padding-left: 2px;
    background: #1f1f1f;
    color: #8b8c8d;
}
.logo { width: 16px; height: 16px; margin-right: 6px; }
.app-title { font-size: 12px; }
.win-buttons { margin-left: auto; display: flex; }
.win-buttons button { width: 46px; height: 20px; }
.win-buttons svg { width: 10px; height: 10px; fill: none; stroke: #a0a0a0; }

.menubar {
    display: flex;
    align-items: center;
    gap: 19px;
    flex: none;
    height: 22px;
    padding-left: 11px;
    background: #23262b;
}
.menubar a { color: #cdced0; text-decoration: none; }

/* toolbars */
.toolbar {
    display: flex;
    align-items: center;
    flex: none;
    gap: 5px;
}
.group {
    display: flex;
    align-items: center;
    flex: none;
    height: 25px;
    border-radius: 3px;
    background: #414447;
    box-shadow: inset 0 0 0 1px #575c5f;
    overflow: hidden;
}
.group button {
    width: 25px;
    height: 25px;
    display: flex;
    align-items: center;
    justify-content: center;
    font-size: 10px;
    color: #d6d7d9;
}
.group button svg, .lead { width: 16px; height: 16px; flex: none; }
.group button.slim { width: 18px; }
.group button.mid { width: 22px; }
.group .on { background: #d6d7d9; color: #26292c; }
.group .dark { background: #17191b; box-shadow: inset 0 0 0 1px #575c5f; }
.group .off { color: #7b7e81; }
.group .lit { background: #414447; }
.group .split { border-left: 1px solid #575c5f; }
.group.field { background: #17191b; }
.narrow button { width: 22px; }
.letters button, .group .q { font: bold 15px "Open Sans", sans-serif; }
.letters .mute-on { background: #c0b032; color: #26292c; }
.group .e, .ch-grid .e { font: bold 17px/17px "Open Sans", sans-serif; }
.handle { width: 13px; text-align: center; font-weight: bold; }
.lead { margin-left: 6px; }
.push { margin-left: 5px; }

.pick {
    position: relative;
    display: flex;
    height: 23px;
    background: #17191b;
}
.pick::after {
    content: "▼";
    position: absolute;
    right: 5px;
    top: 4px;
    font-size: 10px;
    pointer-events: none;
}
.pick select {
    appearance: none;
    width: 100%;
    padding: 0 16px 0 6px;
    font-size: 12px;
}
.soft select { color: #a5a7a9; }
.w88 { width: 88px; }
.w92 { width: 92px; }
.w100 { width: 100px; }
.w112 { width: 112px; }
.w116 { width: 116px; }
.w124 { width: 124px; }

.dots {
    flex: none;
    width: 3px;
    height: 15px;
    background: repeating-linear-gradient(#c4c6c8 0 3px, transparent 3px 6px);
}

.main-toolbar {
    height: 37px;
    padding: 0 5px 0 9px;
    background: #24272c;
}
.toolbar-mid { display: flex; gap: 5px; margin-left: 308px; }
.toolbar-end { display: flex; gap: 5px; margin-left: auto; }

/* status chips */
.status {
    display: flex;
    justify-content: center;
    flex: none;
    gap: 6px;
    margin: 0;
    padding: 4px 0 9px 12px;
    background: #24272c;
    font-size: 10px;
}
.status div {
    display: flex;
    align-items: center;
    justify-content: space-between;
    width: 160px;
    height: 19px;
    padding: 0 8px;
    border-radius: 2px;
    background: #33363a;
    white-space: nowrap;
}
.status div:nth-child(1) { width: 129px; }
.status div:nth-child(3) { width: 167px; }
.status div:nth-child(4) { width: 163px; }
.status div:nth-child(6) { width: 125px; }
.status div:nth-child(7) { width: 176px; }
.status dd { margin: 0; font-weight: 600; }
.status .warn { color: #e09a48; }

.infoline, .ed-info {
    display: flex;
    align-items: center;
    justify-content: center;
    flex: none;
    height: 40px;
    padding: 2px 0 0 6px;
    background: #18191b;
    color: #b9babc;
}

.overview {
    flex: none;
    height: 30px;
    border-top: 1px solid #08090a;
    background: #24272b;
}
.overview-view {
    width: 315px;
    height: 28px;
    margin-left: 1px;
    padding: 2px 3px;
    background: #505154;
}
.overview-parts {
    width: 261px;
    height: 25px;
    background: linear-gradient(#e7955f 0 2px, #e96458 2px 6px, #eed574 6px 8px, #d7ee7d 8px 10px, #5be0a6 10px 18px, #94e47a 18px 20px, #7d95e6 20px 24px, #45506f 24px);
}

/* workspace */
.workspace {
    flex: 1;
    min-height: 0;
    display: flex;
    gap: 4px;
    padding: 4px 4px 0;
}
.panel {
    border: 2px solid #56595b;
    border-radius: 8px;
    background: #24272b;
}
.zones {
    flex: 1;
    min-width: 0;
    display: flex;
    flex-direction: column;
}

/* inspector */
.inspector {
    display: flex;
    flex-direction: column;
    width: 80px;
    margin-bottom: 5px;
    padding: 2px 7px 6px;
}
.inspector h2 {
    margin: 0 0 11px;
    font-size: 11px;
    line-height: 16px;
    text-align: center;
    color: #eee;
}
.ch-select {
    height: 19px;
    flex: none;
    border-radius: 2px;
    background: #5878ec;
    color: #10194a;
    font-weight: 600;
}
.eq { height: 59px; flex: none; margin: 8px 0 19px; background: #050506; }
.section {
    display: flex;
    align-items: center;
    justify-content: space-between;
    flex: none;
    height: 19px;
    padding: 0 4px;
    border-radius: 2px;
    background: #707276;
    font-weight: 600;
    color: #e4e4e5;
}
.section svg { width: 13px; height: 13px; }
.slot { flex: none; height: 17px; margin: 8px 2px 22px; border: 1px solid #131416; border-radius: 2px; background: #212327; }
.slot.tall { height: 35px; margin-bottom: 0; }
.splitter {
    height: 2px;
    margin-top: auto;
    flex: none;
    background: linear-gradient(90deg, #696b6e 0 18px, transparent 18px 20px, #eee 20px 24px, transparent 24px 26px, #eee 26px 30px, transparent 30px 32px, #eee 32px 36px, transparent 36px 38px, #eee 38px 42px, transparent 42px 44px, #696b6e 44px);
}
.ch-grid {
    display: grid;
    grid-template-columns: 1fr 1fr;
    gap: 1px;
    margin-top: 3px;
    flex: none;
    padding: 1px;
    background: #121315;
}
.ch-grid button {
    height: 18px;
    background: #2f3235;
    color: #b3b5b7;
    font: bold 12px "Open Sans", sans-serif;
    display: flex;
    align-items: center;
    justify-content: center;
}
.ch-grid svg { width: 13px; height: 13px; }
.ch-grid .armed { background: #e63a36; color: #400; }
.pan {
    display: flex;
    flex-direction: column;
    align-items: center;
    flex: none;
    height: 32px;
    margin: 6px 1px 9px;
    border: 1px solid #111214;
    background: #1a1b1d;
    font-size: 10px;
    line-height: 11px;
    color: #eee;
}
.pan i { width: 4px; height: 18px; background: #eee; }
.meters { display: flex; gap: 4px; padding: 0 1px; flex: none; }
.strip {
    flex: 1;
    height: 260px;
    padding-top: 17px;
    border: 1px solid #17181a;
    border-radius: 2px;
    background: #1d1e20;
}
.scale { position: relative; padding: 0; font-size: 9px; line-height: 10px; color: #8c8e90; }
.scale span { position: absolute; left: 0; right: 0; text-align: center; }
.scale span::before { content: "-"; float: left; }
.scale span::after { content: "-"; float: right; }
.fader {
    appearance: none;
    writing-mode: vertical-lr;
    direction: rtl;
    width: 26px;
    height: 228px;
    background: linear-gradient(90deg, transparent 12px, #060606 12px 14px, transparent 14px);
}
.fader::-webkit-slider-thumb {
    appearance: none;
    width: 18px;
    height: 46px;
    background: linear-gradient(#2ea5e8 0 5px, #9fd7f4 5px 12px, #bfe4f8 12px 22px, #223 22px 24px, #e2f3fb 24px 41px, #2aa2e6 41px);
}
.values {
    display: flex;
    flex: none;
    height: 18px;
    margin-top: 7px;
    border: 1px solid #111214;
    text-align: center;
    color: #b0b2b4;
}
.values input, .values output { width: 50%; text-align: center; }
.values output { background: #35383b; }
.values + .ch-grid { margin-top: 6px; }
.ch-num {
    display: flex;
    align-items: center;
    justify-content: space-between;
    flex: none;
    height: 23px;
    margin-top: 3px;
    padding: 0 9px 0 4px;
    border-top: 2px solid #eee;
    font-size: 12px;
}
.ch-num svg { width: 12px; height: 12px; }
.ch-name {
    flex: none;
    height: 34px;
    background: #5878ec;
    color: #10194a;
    font-size: 10px;
    line-height: 14px;
    text-align: center;
    white-space: nowrap;
}

/* project zone */
.project {
    flex: 1;
    min-height: 0;
    display: flex;
    padding: 4px;
}
.tracklist { width: 366px; flex: none; display: flex; flex-direction: column; }
.tl-head { display: flex; gap: 10px; flex: none; height: 24px; padding-right: 2px; }
.tl-head .group, .tl-head button { height: 19px; }
.tl-head .group button svg { width: 14px; height: 14px; }
.tl-head .count { margin-left: auto; }
.count span { width: 62px; padding-left: 4px; }
.tracks {
    flex: none;
    height: 344px;
    margin-left: 1px;
    border-top: 1px solid #56595b;
    padding-right: 11px;
    background: #000;
}
.row {
    display: flex;
    height: 46px;
    border-bottom: 1px solid #08090a;
    background: #24272b;
}
/* first row is scrolled, only its lower half is left */
.row.partial { height: 21px; padding-left: 61px; background: linear-gradient(90deg, #36d69a 40px, #24272b 40px); }
.row.partial .box { height: 17px; border-top: 0; }
.num {
    display: flex;
    justify-content: space-between;
    width: 40px;
    padding: 4px 3px 0 4px;
    color: rgba(0, 0, 0, 0.7);
}
.num svg { width: 15px; height: 15px; }
.row.green .num { background: #36d69a; }
.row.lime .num { background: #93e534; }
.row.blue .num { background: #5b7ce8; }
.box {
    display: flex;
    align-items: center;
    justify-content: space-around;
    width: 47px;
    height: 18px;
    border: 1px solid #121315;
    border-radius: 2px;
    background: #2d3033;
    color: #afb1b3;
    font: bold 13px "Open Sans", sans-serif;
}
.box svg { width: 12px; height: 12px; }
.box button { flex: 1; height: 16px; display: flex; align-items: center; justify-content: center; }
.box .e { font: bold 15px/15px "Open Sans", sans-serif; }
.box.ms { width: 50px; margin: 2px 0 0 5px; }
.box.one { width: 23px; }
.row-body { margin-left: 6px; }
.partial .row-body { margin-left: 40px; }
.name {
    display: block;
    height: 22px;
    padding-left: 3px;
    font: 13px/21px "Liberation Sans", sans-serif;
    color: #dcddde;
}
.boxes { display: flex; gap: 3px; }
.row.selected { background: linear-gradient(90deg, #dfe3ee 43px, #08090a 43px 44px, #9fa0a2 44px); }
.selected .box { background: #98999b; border-color: #55575a; color: #2a2c2e; }
.selected .name { color: #2c2e31; }
.selected .armed { background: #e63a36; color: #400; }
.tl-foot {
    display: flex;
    align-items: center;
    gap: 10px;
    margin-top: auto;
    height: 16px;
    padding: 0 6px 0 8px;
    font-size: 12px;
    color: #b4b6b8;
}
.tl-foot i { margin-left: auto; font-size: 9px; color: #85888a; }
.tl-foot svg { width: 12px; height: 12px; color: #85888a; }
.v-divider {
    width: 2px;
    flex: none;
    margin: 0 1px;
    background: linear-gradient(#696b6e 0 200px, transparent 200px 202px, #eee 202px 206px, transparent 206px 208px, #eee 208px 212px, transparent 212px 214px, #eee 214px 218px, transparent 218px 220px, #eee 220px 224px, transparent 224px 226px, #696b6e 226px);
}
.timeline {
    flex: 1;
    min-width: 0;
    display: flex;
    flex-direction: column;
}
.ruler { position: relative; height: 25px; flex: none; overflow: hidden; background: #191a1d; }
.ruler .range, .ed-ruler .range {
    position: absolute;
    top: 0;
    bottom: 0;
    background: #8d8e91;
}
.range::before, .ruler .range::after {
    content: "";
    position: absolute;
    top: 0;
    left: 0;
    border-top: 9px solid #fff;
    border-right: 9px solid transparent;
}
.ruler .range::after { left: auto; right: 0; border-right: 0; border-left: 9px solid transparent; }
.mark {
    position: absolute;
    top: 0;
    bottom: 0;
    padding: 8px 0 0 4px;
    border-left: 1px solid #111;
    font-weight: 600;
    line-height: 17px;
    color: #16171a;
}
.mark.light { color: #eee; border-color: #ccc; }
.mark.first { border-color: transparent; }
.lanes { position: relative; flex: 1; min-height: 0; overflow: hidden; background: #232629; }
.lanes .inside { position: absolute; top: 0; bottom: 0; background: #262d33; }
.grid-line { position: absolute; top: 0; bottom: 0; width: 1px; background: #54595e; }
.grid-line.cursor { background: #fff; }
.lane-rows { position: relative; margin-top: -25px; }
.lane { position: relative; height: 46px; border-bottom: 1px solid #383d41; }
.clip {
    position: absolute;
    top: 2px;
    height: 42px;
    border: 1px solid;
    outline: 1px solid rgba(0, 0, 0, 0.35);
}
.clip.green { background: rgba(50, 176, 130, 0.97); border-color: #6ce8bd; }
.clip.lime { background: rgba(119, 185, 50, 0.98); border-color: #aef25c; }
.clip.blue { background: rgba(80, 112, 196, 0.94); border-color: #7fa5ff; }
.clip span {
    display: inline-block;
    height: 17px;
    padding: 0 3px;
    font: bold 11px/17px "Liberation Sans", sans-serif;
    color: #07130f;
}
.clip.green span { background: #36c38f; }
.clip.lime span { background: #85cd3d; }
.clip.blue span { background: #5b79dd; }
.lane svg { position: absolute; left: 0; top: 0; width: 100%; height: 46px; }

/* scroll bars */
.hscroll { display: flex; align-items: center; flex: none; height: 12px; background: #3c3e41; }
.hscroll b, .vscroll b { font: bold 12px/12px "Open Sans", sans-serif; width: 12px; text-align: center; color: #e6e6e7; }
.htrack { flex: 1; padding-left: 6px; }
.hthumb { width: 28px; height: 8px; border-radius: 2px; background: #f4f4f5; }
.hthumb.wide { width: 210px; }
.hscroll .cell, .vscroll .cell { font-size: 8px; background: #3c3e41; }
.hscroll .cell { border-left: 3px solid #24272b; border-right: 3px solid #24272b; width: 18px; }
.zoomer { display: flex; align-items: center; width: 84px; }
.zoomer input {
    appearance: none;
    flex: 1;
    height: 2px;
    background: #75787b;
}
.zoomer input::-webkit-slider-thumb, .vr::-webkit-slider-thumb {
    appearance: none;
    width: 8px;
    height: 8px;
    border-radius: 4px;
    background: #fff;
}
.vscroll { display: flex; flex-direction: column; align-items: center; width: 12px; flex: none; gap: 3px; }
.project .vscroll { margin-bottom: 12px; }
.vscroll .cell { flex: none; height: 12px; display: flex; align-items: center; justify-content: center; }
.vscroll .cell.head { height: 22px; border: 1px solid #5b5e61; border-radius: 2px; font-size: 9px; }
.vscroll .cell svg { width: 9px; height: 9px; }
.vr {
    appearance: none;
    writing-mode: vertical-lr;
    direction: rtl;
    width: 12px;
    height: 48px;
    flex: none;
    background: linear-gradient(90deg, #3c3e41 5px, #75787b 5px 7px, #3c3e41 7px);
}
.vtrack { flex: 1; display: flex; flex-direction: column; justify-content: space-between; width: 12px; background: #3c3e41; }
.vthumb { width: 6px; height: 28px; margin: -22px auto 0; border-radius: 2px; background: #f4f4f5; }
.vthumb.low { height: 99px; margin: auto auto 4px; }
.vzoom { display: flex; flex-direction: column; background: #3c3e41; }
.vzoom .vr { height: 60px; }

/* key editor */
.editor { flex: none; margin-top: 5px; padding: 6px 7px 7px; }
.ed-toolbar .last { margin-left: auto; }
.vel { width: 30px; padding-left: 6px; font-size: 12px; }
.spin { width: 10px; height: 18px; margin: 0 6px; flex: none; }
.ed-info { margin-top: 7px; }
.ed-body { display: flex; }
.ed-keys { width: 70px; flex: none; }
.key-top { height: 25px; background: #1b1c1f; }
.keys { position: relative; width: 67px; height: 201px; overflow: hidden; background: #b2b3b5; }
.white-line { position: absolute; left: 0; right: 0; height: 1px; background: #1c1d1f; }
.black-key { position: absolute; left: 0; width: 38px; height: 11px; background: #18191b; }
.key-name { position: absolute; right: 8px; color: #25272a; font-size: 12px; line-height: 12px; }
.lane-name {
    width: 68px;
    height: 30px;
    padding: 0 3px;
    border: 1px solid #5b5e61;
    font-size: 9px;
    white-space: nowrap;
}
.lane-add { display: flex; width: 68px; height: 12px; margin-top: 29px; background: #3c3e41; }
.lane-add button { flex: 1; display: flex; align-items: center; justify-content: center; font-size: 9px; line-height: 10px; border: 1px solid #54575a; }
.lane-add svg { width: 9px; height: 9px; }
.ed-main { flex: 1; min-width: 0; }
.ed-ruler { position: relative; height: 25px; overflow: hidden; background: #1b1c1f; }
.tick { position: absolute; top: 0; width: 1px; height: 9px; background: #5f6063; }
.tick.beat { background: #1b1c1f; }
.part-name {
    position: absolute;
    bottom: 0;
    height: 16px;
    padding: 0 4px;
    background: #36383b;
    color: #d0d1d3;
    font: bold 11px/16px "Liberation Sans", sans-serif;
}
.notes, .velocity { position: relative; overflow: hidden; background: #303134; }
.notes { height: 199px; }
.velocity { height: 58px; }
.part-area { position: absolute; top: 0; bottom: 0; right: 0; background: #24272a; }
.pitch { position: absolute; right: 0; height: 11px; background: #202326; }
.pitch-line { position: absolute; left: 0; right: 0; height: 1px; background: #535659; }
.pitch-line.weak { background: #3a3d40; }
.v { position: absolute; top: 0; bottom: 0; width: 1px; background: #303437; }
.v.beat { background: #4f5356; }
.v.bar { background: #6a6e71; }
.v.cursor { background: #fff; }
.note {
    position: absolute;
    height: 11px;
    border: 1px solid #2b0909;
    background: #e22524;
    padding-left: 2px;
    font-size: 8px;
    line-height: 9px;
    font-weight: 600;
    color: #fff;
}
.vel-bar { position: absolute; top: 3px; bottom: 0; width: 5px; background: #dc2a29; border-top: 1px solid #2b0909; border-right: 1px solid #2b0909; }
/* grip of four dashes in the middle of the divider */
.h-divider {
    display: flex;
    justify-content: center;
    height: 3px;
    padding-left: 14px;
    background: #77797b;
}
.h-divider::before {
    content: "";
    width: 24px;
    background: repeating-linear-gradient(90deg, #fff 0 4px, #24272b 4px 6px);
}
.ed-scroll { gap: 0; }
.ed-scroll .head { margin: 1px 0 2px; }
.ed-scroll .vtrack { flex: none; height: 118px; }
.ed-scroll .vtrack.faint { height: 57px; }
.ed-scroll .vtrack.faint b { color: #6a6d70; }
.ed-scroll .vzoom { height: 77px; margin: 4px 0 3px; }
.ed-scroll .vr { height: 53px; }
.zoomer.short { border-left: 3px solid #24272b; }

/* lower zone tabs */
.tabs { display: flex; flex: none; height: 24px; padding-left: 4px; font-weight: 600; font-size: 12px; }
.tabs button { padding: 0 18px; height: 21px; color: #d2d3d5; white-space: nowrap; }
.tabs .close { padding: 0; width: 14px; }
.tabs .close svg { width: 12px; height: 12px; vertical-align: middle; }
.tabs .tab-first { padding-left: 23px; }
.tabs .kana { font-size: 11px; }
.tabs .active {
    display: flex;
    align-items: center;
    justify-content: space-between;
    width: 107px;
    height: 23px;
    margin-top: -2px;
    padding: 3px 4px 0 18px;
    border: 2px solid #56595b;
    border-top: 0;
    border-radius: 0 0 4px 4px;
    background: #24272b;
    font-size: 11px;
}
.tabs i { font-size: 9px; }

/* transport */
.transport { height: 40px; padding: 0 4px; background: #24272c; }
.aq { width: 38px; height: 25px; border-radius: 3px; background: #f0993d; color: #3a2408; font-size: 14px; }
.transport-mid { display: flex; align-items: center; gap: 6px; margin-left: auto; }
.transport-end { display: flex; align-items: center; gap: 5px; margin-left: auto; }
.pos { width: 124px; padding-right: 6px; text-align: right; font-size: 14px; white-space: pre; }
.tempo { width: 64px; padding-left: 10px; font-size: 12px; }
.sig { width: 46px; text-align: center; font-size: 12px; }
.group .tap { width: 50px; font-size: 12px; }
.perf { width: 87px; }
.perf::before { content: ""; width: 1px; height: 25px; margin-left: 25px; background: #44484b; }
.play-keys { display: flex; height: 31px; padding: 2px; border-radius: 3px; background: #a9abad; }
.play-keys button { width: 49px; background: #606467; color: #e8e8e9; display: flex; align-items: center; justify-content: center; }
.play-keys svg { width: 20px; height: 20px; }
.play-keys .step { width: 37px; }
.play-keys .stopped { width: 51px; background: #a7abb0; color: #17191b; }

/* export dialog */
.dialog {
    position: fixed;
    left: calc(50% - 200px);
    top: calc(50% - 89px);
    width: 400px;
    border-radius: 7px;
    overflow: hidden;
    background: #abb5c0;
    color: #111;
    box-shadow: 0 4px 40px 8px rgba(0, 0, 0, 0.55);
}
.dialog h1 {
    margin: 0;
    padding: 0 8px;
    font-size: 11px;
    font-weight: 400;
    line-height: 30px;
    background: #192023;
    color: #f0f0f0;
}
.dialog-body { display: flex; flex-direction: column; padding: 32px 6px 6px; }
.dialog p { margin: 0 0 2px; }
.progress {
    position: relative;
    height: 25px;
    border: 2px solid #000;
    background: #000;
}
.bar { height: 100%; background: linear-gradient(#c0d3e8, #a0bad8); }
.progress span { position: absolute; inset: 0; text-align: center; line-height: 19px; font-weight: 600; }
.dialog-body button {
    align-self: flex-end;
    width: 100px;
    height: 22px;
    margin-top: 37px;
    border: 1px solid #0f6fae;
    border-radius: 3px;
    background: #fdfdfd;
    color: #111;
    font-size: 11px;
}
```

FILE: script.js
```js
const BAR = 17.3125;          // width of one bar in the project ruler
const ORIGIN = 8;             // bar 1 in the project ruler
const ED_BAR = 326;           // width of one bar in the key editor
const ED_ORIGIN = 168;

const byId = id => document.getElementById(id);
const icon = name => `<svg><use href="#i-${name}"/></svg>`;

function add(parent, cls, style, html) {
    const el = document.createElement('div');
    el.className = cls;
    Object.assign(el.style, style);
    if (html) el.innerHTML = html;
    parent.appendChild(el);
    return el;
}
const px = n => Math.round(n) + 'px';

const tracks = [
    { color: 'green', partial: true, clip: [26, ''], dots: true },
    { num: 14, name: 'HALion Sonic 04 (D)', color: 'green', clip: [26, 'HALion Sonic 04'], melody: [29, 17] },
    { num: 16, name: 'HALion Sonic 04 (D)', color: 'green', clip: [26, 'HALion Sonic 04'], melody: [18, 17], dots: true },
    { num: 18, name: 'HALion Sonic 04 (D)', color: 'green', clip: [51, 'HALion Sonic 04 (D)'], riffs: true },
    { num: 20, name: 'HALion Sonic 04 (D)', color: 'lime', clip: [51, 'HALion Sonic 04 (D)'], riffs: true },
    { num: 22, name: 'Groove Agent SE 01', color: 'blue', clip: [26, 'Groove Agent SE 01'], drums: 1 },
    { num: 24, name: 'Groove Agent SE 02', color: 'blue', clip: [26, 'Groove Agent SE 02'], drums: 2 },
    { num: 26, name: 'Electronica - Percu...TL', color: 'blue', selected: true, hits: true }
];
const CLIP_END = 1204;

// track list
tracks.forEach(t => {
    const head = t.partial ? '' : `
        <div class="num">${icon(t.selected ? 'wave' : 'piano')}${t.num}</div>
        <div class="box ms"><button>M</button><button>S</button></div>`;
    add(byId('tracks'), `row ${t.color}${t.selected ? ' selected' : ''}${t.partial ? ' partial' : ''}`, {}, `${head}
        <div class="row-body">
            ${t.partial ? '' : `<span class="name">${t.name}</span>`}
            <div class="boxes">
                <div class="box"><button class="${t.selected ? 'armed' : ''}">${icon('rec')}</button><button>${icon('speaker')}</button></div>
                <div class="box"><button class="e">e</button><button>${icon(t.selected ? 'stereo' : 'piano')}</button></div>
                <div class="box"><button>R</button><button>W</button></div>
                <div class="box one"><button>${icon('lanes')}</button></div>
            </div>
        </div>`);
});

// project ruler
const ruler = byId('ruler');
const lanes = byId('lanes');
add(ruler, 'range', { left: px(ORIGIN), width: '1213px' });
add(lanes, 'inside', { left: px(ORIGIN), width: '1213px' });
for (let bar = 1; bar <= 81; bar += 4) {
    const x = ORIGIN + (bar - 1) * BAR;
    add(ruler, 'mark' + (bar > 70 ? ' light' : '') + (bar === 1 ? ' first' : ''), { left: px(x) }, String(bar));
    add(lanes, 'grid-line' + (bar === 1 ? ' cursor' : ''), { left: px(x) });
}

// miniature notes, each one is [x, y, width]
const CLIMB = [[0, 0, 5], [7, 0, 1], [10, 0, 1], [5, 5, 1], [10, 5, 1], [12, -1, 2], [14, -3, 2], [16, -5, 3], [19, -6, 2], [21, -4, 3], [24, -5, 3], [27, -3, 2]];
const PEAK = [[0, -9, 3], [2, -7, 2], [4, -5, 2], [6, -3, 2], [8, -1, 3], [11, -3, 2], [13, -5, 2], [15, -3, 2], [17, -1, 2], [19, 0, 5]];
const SLASH = [[0, 0, 1], [1, -3, 1], [2, -6, 1], [3, -9, 2], [5, -12, 1], [7, -15, 1], [8, -18, 1]];
const HOOK = [[0, 0, 1], [1, -3, 1], [3, -6, 1], [4, -9, 2], [6, -12, 2], [8, -15, 9]];
const FALL = [[0, 0, 4], [3, 1, 3], [5, 3, 3], [8, 5, 4]];
const BEND = [[0, 2, 2], [2, 0, 2], [4, 2, 2], [6, 3, 2], [7, 5, 5]];

const place = (shape, x, y) => shape.map(n => `M${x + n[0]} ${y + n[1]}h${n[2] + 1}v2h-${n[2] + 1}z`).join('');

function miniNotes(t) {
    let d = '';
    if (t.dots) {
        [57, 91, 161, 197, 232, 318, 922, 957, 1026, 1061, 1095, 1165, 1200].forEach(x => d += place([[0, 0, 1]], x, 34));
    }
    if (t.melody) {
        const [left, right] = t.melody;
        [36, 71, 106].forEach(x => d += place([[0, 5, 1], [4, 5, 1]], x, 15));
        d += place(FALL, 119, 12) + place(PEAK, 134, 16);
        [164, 198, 233].forEach(x => d += place(CLIMB, x, left));
        d += place(PEAK, 273, left) + place([[0, 0, 26]], 293, left);
        [891, 926, 960, 1030, 1064, 1099].forEach(x => d += place(CLIMB, x, right));
        [999, 1138, 1172].forEach(x => d += place(PEAK, x, right));
    }
    if (t.riffs) {
        d += place(SLASH.slice(0, 3), 53, 24);
        d += place(SLASH, 86, 31) + place(SLASH, 190, 28) + place(HOOK, 224, 31);
        [121, 259].forEach(x => d += place(FALL, x, 22));
        [147, 285].forEach(x => d += place(BEND, x, 22));
        [918, 1056].forEach(x => d += place(SLASH, x, 28) + place(HOOK, x + 34, 31));
        [986, 1125].forEach(x => d += place(FALL, x, 21) + place(BEND, x + 26, 21));
        d += place(BEND, 1185, 21);
    }
    if (t.drums === 1) {
        for (let x = 28; x < CLIP_END - 3; x += 4) {
            const phase = (x - 28) % 138;
            const beat = phase % 34.6;
            const gap = phase < 103 && beat > 23 && (beat < 27 || beat > 31);
            if (phase > 103 && phase < 114) {
                d += `M${x} ${37 - x % 3}l2 2-2 3-2-3z`;
                continue;
            }
            if (gap) continue;
            d += `M${x} 27l2 3-2 3-2-3zM${x} 33l2 3-2 2-2-2zM${x - 1} 36h3v3h1v3h-5v-3h1z`;
        }
        [134, 273, 723, 862, 1000, 1139, 1173].forEach(x => d += `M${x} 19l3 3-3 3-3-3z`);
    }
    if (t.drums === 2) {
        for (let x = 28; x < CLIP_END - 4; x += 3) {
            d += `M${x} 27h2v6h-2z`;
        }
        d += `M28 29H${CLIP_END - 2}v4H28zM28 40H${CLIP_END - 2}v2H28z`;
        for (let x = 30; x < CLIP_END - 10; x += 6) {
            d += `M${x - 2} 41l3-9h${x % 4 + 2}l-2 9z`;
        }
        [60, 134, 198, 273, 723, 754, 792, 862, 891, 926, 1000, 1065, 1139, 1173].forEach(x => d += `M${x} 19l3 3-3 3-3-3z`);
    }
    return d;
}

const noteColor = { green: '#137a55', lime: '#3f8410', blue: '#1f41b4' };
const rows = add(lanes, 'lane-rows', {});
tracks.forEach(t => {
    const lane = add(rows, 'lane', {});
    if (t.clip) {
        add(lane, `clip ${t.color}`, { left: px(t.clip[0]), width: px(CLIP_END - t.clip[0]) },
            t.clip[1] ? `<span>${t.clip[1]}</span>` : '');
    }
    let shapes = `<path d="${miniNotes(t)}" fill="${noteColor[t.color]}"/>`;
    if (t.clip) {
        // bar lines stay visible through the part
        for (let bar = 5; bar < 70; bar += 4) {
            shapes += `<path d="M${Math.round(ORIGIN + (bar - 1) * BAR)} 3h1v40h-1z" fill="${noteColor[t.color]}" opacity=".3"/>`;
        }
    }
    if (t.hits) {
        const hits = [918, 922, 926, 955, 958, 961, 987, 993, 997, 1011, 1014, 1017, 1020, 1023, 1057, 1060, 1063, 1093, 1096, 1099, 1126, 1130, 1135, 1150, 1153, 1156, 1159, 1162, 1184, 1187, 1190, 1193, 1196];
        shapes = hits.map(x => `<path d="M${x} 2h3v42h-3z" fill="#2747a8"/><path d="M${x} 3h1v40h-1z" fill="#7da2ff"/>`).join('');
    }
    lane.insertAdjacentHTML('beforeend', `<svg>${shapes}</svg>`);
});

// fader scale
[['0', 18], ['6', 49], ['12', 80], ['18', 111], ['24', 141], ['30', 168], ['40', 204], ['50', 227]].forEach(([label, y]) => {
    const s = document.createElement('span');
    s.textContent = label;
    s.style.top = y + 'px';
    byId('scale').appendChild(s);
});

// piano keys, C6 ends 44px below the top of the view
const keys = byId('keys');
for (let i = -2; i < 9; i++) {
    add(keys, 'white-line', { top: px(44 + i * 132 / 7 - 1) });
}
[0, 21, 56, 75, 96, 132, 153, 188].forEach(y => add(keys, 'black-key', { top: px(y) }));
add(keys, 'key-name', { top: '32px' }, 'C6');
add(keys, 'key-name', { top: '164px' }, 'C5');

// key editor ruler
const edRuler = byId('edRuler');
add(edRuler, 'range', { left: px(ED_ORIGIN), right: '3px' });
for (let i = 1; i < 77; i++) {
    if (i % 16) add(edRuler, 'tick' + (i % 4 ? '' : ' beat'), { left: px(ED_ORIGIN + i * ED_BAR / 16) });
}
[1, 2, 3, 4, 5].forEach(bar => {
    add(edRuler, 'mark' + (bar === 1 ? ' first' : ''), { left: px(ED_ORIGIN + (bar - 1) * ED_BAR) }, bar === 2 ? '' : String(bar));
});
const partStart = ED_ORIGIN + ED_BAR;
add(edRuler, 'part-name', { left: px(partStart) }, 'HALion Sonic 04');

// key editor grid: sixteenth triplets inside the part, beats before it
[byId('notes'), byId('velocity')].forEach((area, isVelocity) => {
    add(area, 'part-area', { left: px(partStart) });
    if (!isVelocity) {
        [0, 22, 55, 77, 99, 132, 154, 187].forEach(y => add(area, 'pitch', { left: px(partStart), top: px(y) }));
    }
    for (let i = 0; i < 4; i++) {
        add(area, 'v beat' + (i ? '' : ' cursor'), { left: px(ED_ORIGIN + i * ED_BAR / 4) });
    }
    for (let i = 0; i < 91; i++) {
        const kind = i % 24 === 0 && i ? ' bar' : i % 6 === 0 ? ' beat' : '';
        add(area, 'v' + kind, { left: px(partStart + i * ED_BAR / 24) });
    }
    if (!isVelocity) {
        add(area, 'pitch-line', { top: '44px' });
        add(area, 'pitch-line weak', { top: '121px', left: px(partStart) });
        add(area, 'pitch-line', { top: '176px' });
    }
});

const rowOf = { 'D#6': 0, 'D6': 11, 'C6': 33, 'A#5': 55, 'F5': 110 };
const phrase = [['A#5', 0, 6], ['F5', 6, 2], ['A#5', 8, 2], ['F5', 10, 2], ['A#5', 12, 2], ['C6', 14, 2], ['D6', 16, 2], ['D#6', 18, 2], ['D6', 20, 2], ['C6', 22, 2], ['D6', 24, 4]];
[0, 32].forEach(offset => phrase.forEach(([pitch, start, length]) => {
    const step = ED_BAR / 16;
    const x = partStart + (offset + start) * step;
    add(byId('notes'), 'note', { left: px(x), top: px(rowOf[pitch]), width: px(length * step) }, pitch);
    add(byId('velocity'), 'vel-bar', { left: px(x) });
}));
```
